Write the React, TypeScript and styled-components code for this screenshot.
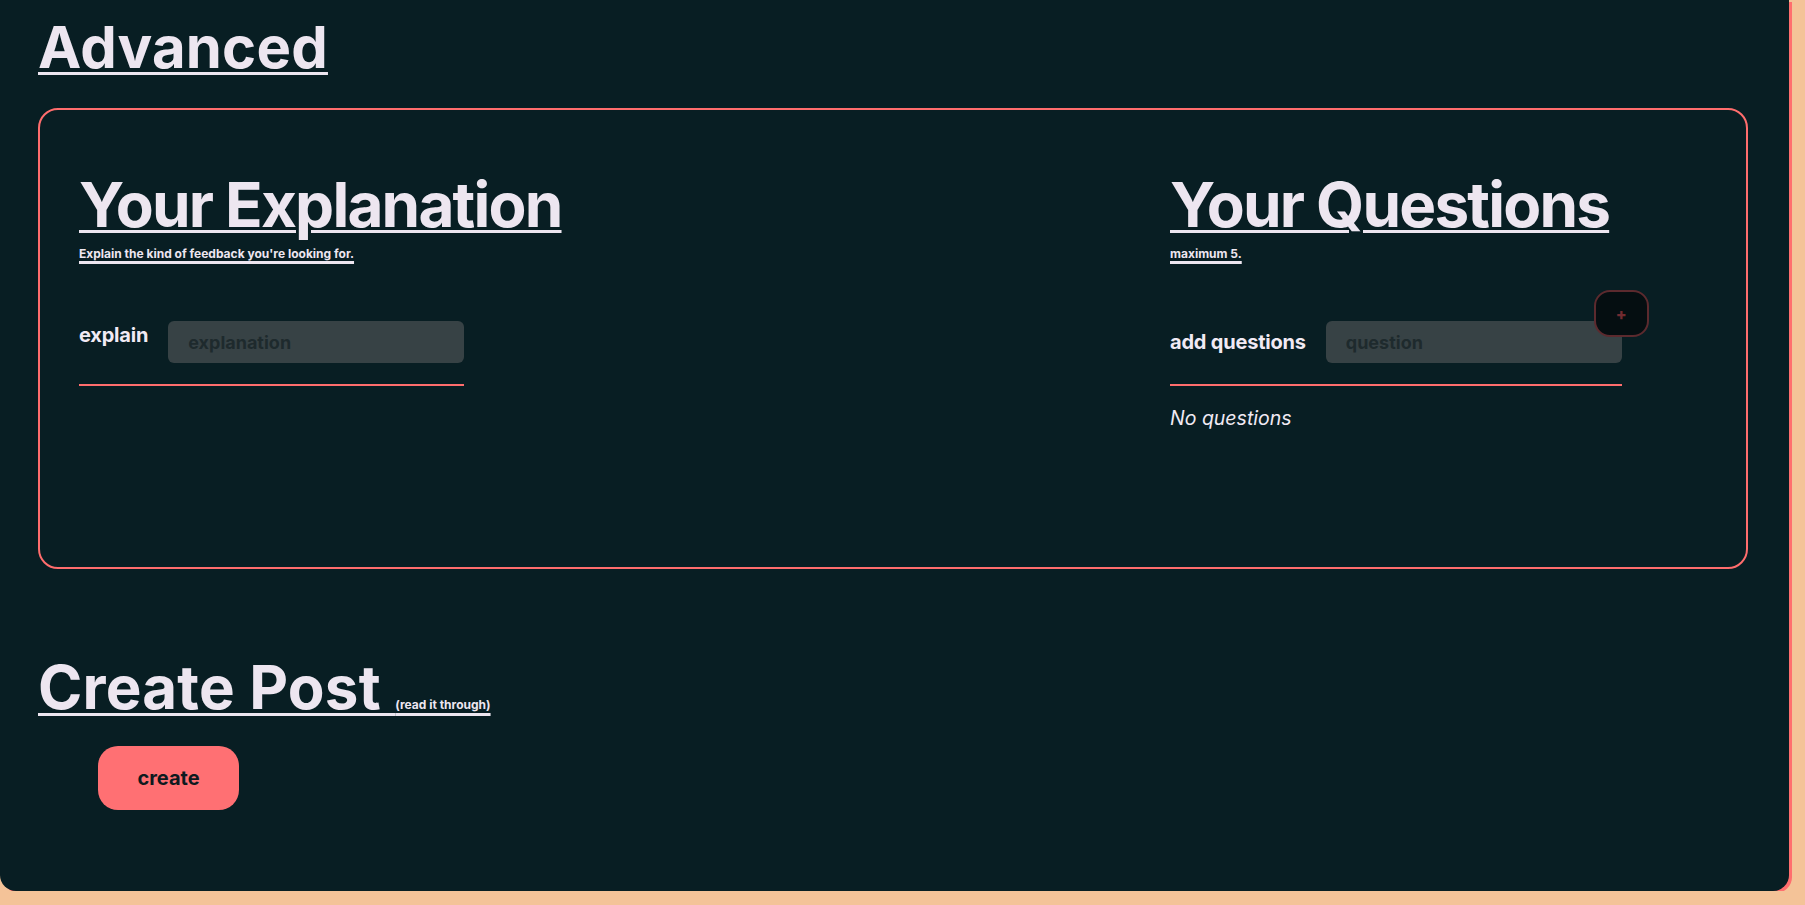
import React from "react";
import styled, { createGlobalStyle } from "styled-components";

const GlobalStyle = createGlobalStyle`
  html, body {
    margin: 0;
    padding: 0;
    background: #f4c398;
  }
  body {
    font-family: Inter, "Noto Sans", sans-serif;
    color: #ede6f0;
    overflow: hidden;
  }
`;

const Page = styled.main`
  display: flow-root;
  width: 1789px;
  height: 891px;
  box-sizing: border-box;
  padding: 0 0 0 38px;
  background: #081e23;
  border-radius: 0 0 16px 16px;
  box-shadow: 3px 2px 0 #ff6e6e;
`;

const Heading = styled.h1<{ $size: number; $top: number }>`
  margin: ${(p) => p.$top}px 0 0;
  font-size: ${(p) => p.$size}px;
  font-weight: 700;
  line-height: 72px;
  letter-spacing: 0.2px;
  text-decoration: underline;
  text-decoration-thickness: 3px;
  text-underline-offset: 4px;
`;

const Card = styled.section`
  margin-top: 25px;
  width: 1710px;
  height: 461px;
  box-sizing: border-box;
  border: 2px solid #ff6d6d;
  border-radius: 20px;
  padding: 58px 39px 0 39px;
  display: flex;
`;

const Column = styled.div<{ $width?: number }>`
  flex: ${(p) => (p.$width ? `0 0 ${p.$width}px` : "1")};
  display: flex;
  flex-direction: column;
  align-items: flex-start;
`;

const Title = styled.h2`
  margin: 0;
  font-size: 62px;
  font-weight: 700;
  line-height: 74px;
  letter-spacing: -1.8px;
  text-decoration: underline;
  text-decoration-thickness: 3px;
  text-underline-offset: 3px;
`;

const Sub = styled.p`
  margin: 4px 0 0;
  font-size: 12px;
  font-weight: 700;
  line-height: 16px;
  text-decoration: underline;
  text-decoration-thickness: 3px;
  text-underline-offset: 3px;
`;

const Field = styled.div<{ $center?: boolean }>`
  margin-top: 59px;
  display: flex;
  align-items: ${(p) => (p.$center ? "center" : "flex-start")};
  gap: 20px;
  padding-bottom: 21px;
  border-bottom: 2px solid #ff6d6d;
`;

const Label = styled.label<{ $raise?: boolean }>`
  font-size: 20px;
  font-weight: 700;
  line-height: 22px;
  letter-spacing: -0.2px;
  color: #f1eaf4;
  margin-top: ${(p) => (p.$raise ? "3px" : "0")};
`;

const InputWrap = styled.div`
  position: relative;
`;

const Input = styled.input`
  display: block;
  width: 296px;
  height: 42px;
  box-sizing: border-box;
  border: none;
  outline: none;
  border-radius: 6px;
  background: #374245;
  padding: 0 20px;
  font-family: Inter, sans-serif;
  font-size: 18px;
  font-weight: 700;
  color: #1d2a2d;
  &::placeholder {
    color: #1e2a2d;
  }
`;

const AddButton = styled.button`
  position: absolute;
  top: -31px;
  right: -27px;
  width: 55px;
  height: 47px;
  box-sizing: border-box;
  border-radius: 16px;
  border: 2px solid #5c2a2e;
  background: #050e11;
  color: #722b30;
  font-family: Inter, sans-serif;
  font-size: 16px;
  font-weight: 800;
  display: flex;
  align-items: center;
  justify-content: center;
  padding: 0;
`;

const Empty = styled.p`
  margin: 20px 0 0;
  font-size: 19.5px;
  font-style: italic;
  line-height: 24px;
  color: #f1eaf4;
`;

const Hint = styled.span`
  font-size: 12px;
  font-weight: 700;
  line-height: 1;
  letter-spacing: 0;
`;

const CreateButton = styled.button`
  display: block;
  margin: 23px 0 0 60px;
  width: 141px;
  height: 64px;
  border: none;
  border-radius: 20px;
  background: #ff7073;
  color: #0d1a1f;
  font-family: Inter, sans-serif;
  font-size: 20px;
  font-weight: 700;
`;

export default function App() {
  return (
    <>
      <GlobalStyle />
      <Page>
        <Heading $size={58} $top={11}>
          Advanced
        </Heading>
        <Card>
          <Column>
            <Title>Your Explanation</Title>
            <Sub>Explain the kind of feedback you're looking for.</Sub>
            <Field>
              <Label $raise>explain</Label>
              <Input placeholder="explanation" />
            </Field>
          </Column>
          <Column $width={537}>
            <Title>Your Questions</Title>
            <Sub>maximum 5.</Sub>
            <Field $center>
              <Label>add questions</Label>
              <InputWrap>
                <Input placeholder="question" />
                <AddButton>+</AddButton>
              </InputWrap>
            </Field>
            <Empty>No questions</Empty>
          </Column>
        </Card>
        <Heading $size={60} $top={82}>
          Create Post <Hint>(read it through)</Hint>
        </Heading>
        <CreateButton>create</CreateButton>
      </Page>
    </>
  );
}
